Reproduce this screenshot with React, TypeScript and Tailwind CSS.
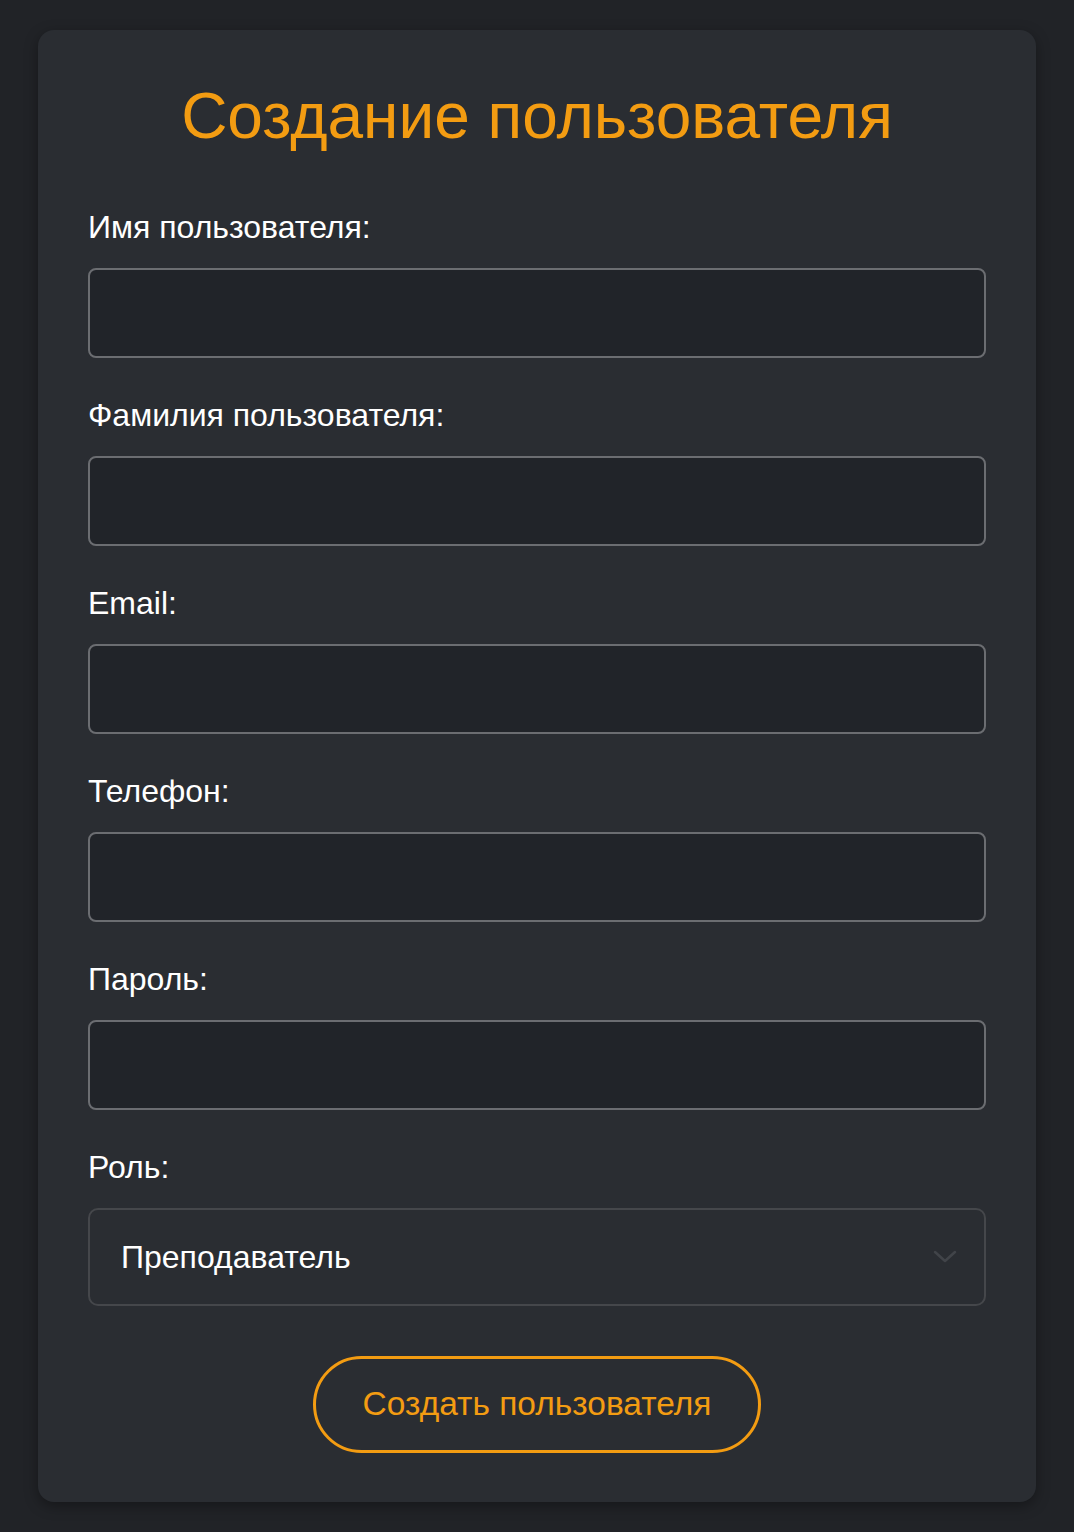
import React from "react";

const fields = [
  { label: "Имя пользователя:", type: "text" },
  { label: "Фамилия пользователя:", type: "text" },
  { label: "Email:", type: "email" },
  { label: "Телефон:", type: "tel" },
  { label: "Пароль:", type: "password" },
];

export default function App() {
  return (
    <div
      className="min-h-[1532px] w-full bg-[#212327] pt-[30px] pb-[30px]"
      style={{ fontFamily: '"Liberation Sans", Arial, sans-serif' }}
    >
      <div className="mx-auto w-[998px] rounded-[16px] bg-[#2a2d32] px-[50px] pt-[50px] pb-[49px] shadow-[0_4px_14px_rgba(0,0,0,0.35)]">
        <h1 className="mb-[57px] h-[72px] text-center text-[64px] leading-[72px] font-normal text-[#f39c12]">
          Создание пользователя
        </h1>
        {fields.map((f) => (
          <div key={f.label} className="mb-[39px]">
            <label className="mb-[23px] block text-[32px] leading-[36px] text-white">
              {f.label}
            </label>
            <input
              type={f.type}
              className="block h-[90px] w-full rounded-[8px] border-2 border-[#6b6d71] bg-[#212429] px-[20px] text-[32px] text-white outline-none"
            />
          </div>
        ))}
        <div className="mb-[50px]">
          <label className="mb-[23px] block text-[32px] leading-[36px] text-white">
            Роль:
          </label>
          <div className="relative flex h-[98px] w-full items-center rounded-[10px] border-2 border-[#45474b] bg-[#2a2d32] pl-[31px] text-[32px] text-white">
            <span>Преподаватель</span>
            <svg
              className="absolute right-[27px] top-1/2 -translate-y-1/2"
              width="24"
              height="14"
              viewBox="0 0 24 14"
              fill="none"
            >
              <path d="M2 2 L12 11 L22 2" stroke="#414449" strokeWidth="2.5" strokeLinecap="round" strokeLinejoin="round" />
            </svg>
          </div>
        </div>
        <div className="flex justify-center">
          <button className="h-[97px] w-[448px] rounded-full border-[3px] border-[#f39c12] bg-transparent text-[33.5px] text-[#f39c12]">
            Создать пользователя
          </button>
        </div>
      </div>
    </div>
  );
}
